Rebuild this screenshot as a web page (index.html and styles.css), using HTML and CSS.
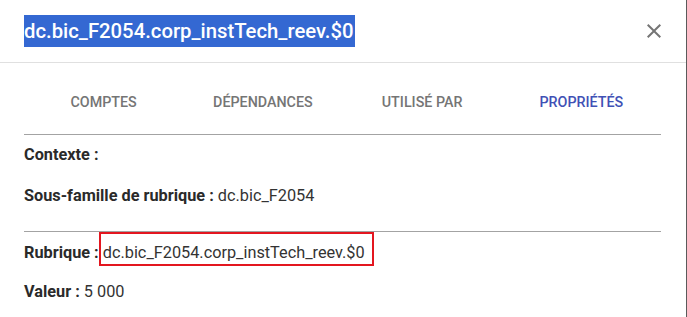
FILE: index.html
```html
<!DOCTYPE html>
<html lang="fr">
<head>
<meta charset="utf-8">
<link rel="stylesheet" href="styles.css">
</head>
<body>
<div class="dialog">
  <header class="dialog-header">
    <h2 class="dialog-title"><span class="title-sel">dc.bic_F2054.corp_instTech_reev.$0</span></h2>
    <button class="close-btn" aria-label="Fermer">
      <svg width="24" height="24" viewBox="0 0 24 24"><path d="M19 6.41 17.59 5 12 10.59 6.41 5 5 6.41 10.59 12 5 17.59 6.41 19 12 13.41 17.59 19 19 17.59 13.41 12z" fill="#757575"/></svg>
    </button>
  </header>
  <nav class="tabs">
    <div class="tab">Comptes</div>
    <div class="tab">Dépendances</div>
    <div class="tab">Utilisé par</div>
    <div class="tab active">Propriétés</div>
  </nav>
  <section class="props first">
    <div class="row"><span class="label">Contexte :</span></div>
    <div class="row"><span class="label">Sous-famille de rubrique :</span> <span class="value">dc.bic_F2054</span></div>
  </section>
  <section class="props second">
    <div class="row"><span class="label">Rubrique :</span> <span class="value marked">dc.bic_F2054.corp_instTech_reev.$0</span></div>
    <div class="row"><span class="label">Valeur :</span> <span class="value">5 000</span></div>
  </section>
</div>
</body>
</html>
```
FILE: styles.css
```css
html, body {
  margin: 0;
  padding: 0;
  background: #ffffff;
}
body {
  width: 687px;
  height: 317px;
  overflow: hidden;
  font-family: Roboto, "Liberation Sans", Arial, sans-serif;
}
.dialog {
  box-sizing: border-box;
  width: 687px;
  height: 317px;
  border-right: 1px solid #5a5a5a;
  background: #fff;
}
.dialog-header {
  box-sizing: border-box;
  height: 63px;
  display: flex;
  align-items: center;
  justify-content: space-between;
  padding: 0 20px 0 24px;
  border-bottom: 1px solid #e0e0e0;
}
.dialog-title {
  margin: 0;
  font-size: 20.3px;
  font-weight: 500;
  line-height: 32px;
  display: flex;
}
.title-sel {
  background: #3468d2;
  color: #ffffff;
  display: inline-block;
  height: 32px;
  line-height: 32px;
  padding-right: 2px;
}
.close-btn {
  border: 0;
  background: transparent;
  padding: 0;
  width: 24px;
  height: 24px;
  display: flex;
  cursor: pointer;
}
.tabs {
  display: grid;
  grid-template-columns: repeat(4, 1fr);
  margin: 0 25px 0 24px;
  padding: 15px 0 8px;
  border-bottom: 1px solid #a3a3a3;
}
.tab {
  height: 48px;
  line-height: 48px;
  text-align: center;
  font-size: 14.3px;
  font-weight: 500;
  text-transform: uppercase;
  color: #757575;
}
.tab.active {
  color: #3f51b5;
}
.props {
  margin: 0 25px 0 24px;
  display: flex;
  flex-direction: column;
  font-size: 16.3px;
  line-height: 20px;
  color: #333;
}
.props.first {
  padding: 10px 0 25px;
  gap: 21px;
  border-bottom: 1px solid #a3a3a3;
}
.props.second {
  padding-top: 11px;
  gap: 19px;
}
.label {
  font-weight: 700;
  color: #2a2a2a;
}
.value {
  color: #333;
}
.marked {
  position: relative;
}
.marked::after {
  content: "";
  position: absolute;
  left: -4px;
  right: -9px;
  top: -11px;
  bottom: -4px;
  border: 2px solid #e3161f;
}
```
